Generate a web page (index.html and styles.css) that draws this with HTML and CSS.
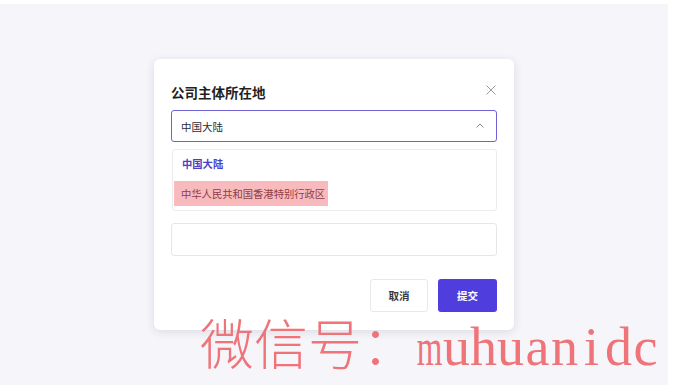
FILE: index.html
```html
<!DOCTYPE html>
<html lang="zh">
<head>
<meta charset="utf-8">
<link rel="stylesheet" href="styles.css">
</head>
<body>
<div class="stage">
  <div class="modal">
    <div class="modal-head">
      <h2 class="title">公司主体所在地</h2>
      <svg class="close" width="10" height="10" viewBox="0 0 10 10"><path d="M0.5 0.5L9.5 9.5M9.5 0.5L0.5 9.5" stroke="#9a9aa2" stroke-width="1" fill="none"/></svg>
    </div>
    <div class="select">
      <span>中国大陆</span>
      <svg class="chev" width="8" height="5" viewBox="0 0 8 5"><path d="M0.5 4.5L4 1L7.5 4.5" stroke="#8a8a92" stroke-width="1" fill="none"/></svg>
    </div>
    <div class="dropdown">
      <div class="opt opt-active">中国大陆</div>
      <div class="opt-row"><span class="opt opt-hl">中华人民共和国香港特别行政区</span></div>
    </div>
    <div class="input"></div>
    <div class="actions">
      <button class="btn btn-cancel">取消</button>
      <button class="btn btn-primary">提交</button>
    </div>
  </div>
  <div class="watermark"><span class="wm-cjk">微信号：</span><span class="c c-m">m</span><span class="c">u</span><span class="c">h</span><span class="c">u</span><span class="c">a</span><span class="c">n</span><span class="c">i</span><span class="c">d</span><span class="c">c</span></div>
</div>
</body>
</html>
```

FILE: styles.css
```css
* { box-sizing: border-box; }
html, body { margin: 0; padding: 0; background: #ffffff; }
body {
  font-family: "Noto Sans CJK SC", "Noto Sans", sans-serif;
  width: 673px;
  height: 385px;
  overflow: hidden;
}
.stage {
  position: relative;
  margin-top: 4px;
  margin-right: 5px;
  height: 381px;
  background: #f5f5fa;
  padding-top: 55px;
  display: flex;
  justify-content: center;
  align-items: flex-start;
}
.modal {
  width: 360px;
  height: 271px;
  background: #ffffff;
  border-radius: 6px;
  box-shadow: 0 2px 10px rgba(30, 30, 60, 0.12);
  padding: 24px 17px 18px 17px;
  display: flex;
  flex-direction: column;
}
.modal-head {
  display: flex;
  justify-content: space-between;
  align-items: flex-start;
  height: 18px;
}
.title {
  margin: 0;
  font-size: 13.5px;
  line-height: 18px;
  font-weight: 600;
  color: #1f1f24;
}
.close {
  margin-top: 2px;
  margin-right: 1px;
}
.select {
  margin-top: 9px;
  height: 32px;
  border: 1px solid #6f63d4;
  border-radius: 3px;
  display: flex;
  align-items: center;
  justify-content: space-between;
  padding: 0 12px 0 9px;
  font-size: 10.5px;
  color: #2c2c33;
}
.chev { margin-top: -1px; }
.dropdown {
  margin-top: 7px;
  margin-left: 1px;
  height: 62px;
  border: 1px solid #ececf0;
  border-radius: 3px;
  padding: 6px 0 5px 0;
  display: flex;
  flex-direction: column;
  gap: 7px;
}
.opt {
  font-size: 10.3px;
  line-height: 16px;
}
.opt-active {
  padding-left: 9px;
  color: #4b3fc9;
  font-weight: 700;
}
.opt-row { height: 25px; }
.opt-hl {
  display: inline-block;
  margin-left: 1px;
  height: 25px;
  line-height: 25px;
  padding: 0 3px 0 7px;
  background: #f8babd;
  color: #8e3e46;
}
.input {
  margin-top: 12px;
  height: 33px;
  border: 1px solid #e6e6ea;
  border-radius: 3px;
}
.actions {
  margin-top: auto;
  display: flex;
  justify-content: flex-end;
  gap: 10px;
}
.btn {
  height: 33px;
  width: 58px;
  border-radius: 3px;
  font-family: "Noto Sans CJK SC", sans-serif;
  font-size: 10.5px;
  font-weight: 700;
  padding: 0;
}
.btn-cancel {
  background: #ffffff;
  border: 1px solid #e8e8ec;
  color: #3a3a40;
}
.btn-primary {
  width: 59px;
  background: #4f3ddd;
  border: none;
  color: #ffffff;
}
.watermark {
  position: absolute;
  left: 200px;
  top: 311px;
  height: 54px;
  line-height: 54px;
  font-size: 54px;
  color: #ef747a;
  white-space: nowrap;
  display: flex;
  align-items: baseline;
}
.wm-cjk {
  font-family: "Noto Sans CJK SC", sans-serif;
  font-weight: 300;
  width: 216px;
}
.c {
  display: inline-block;
  width: 27px;
  text-align: center;
  font-family: "Liberation Serif", serif;
  line-height: 54px;
}
.c-m {
  font-size: 33px;
  transform: scaleY(1.6);
  transform-origin: 50% 38.7px;
}
```
